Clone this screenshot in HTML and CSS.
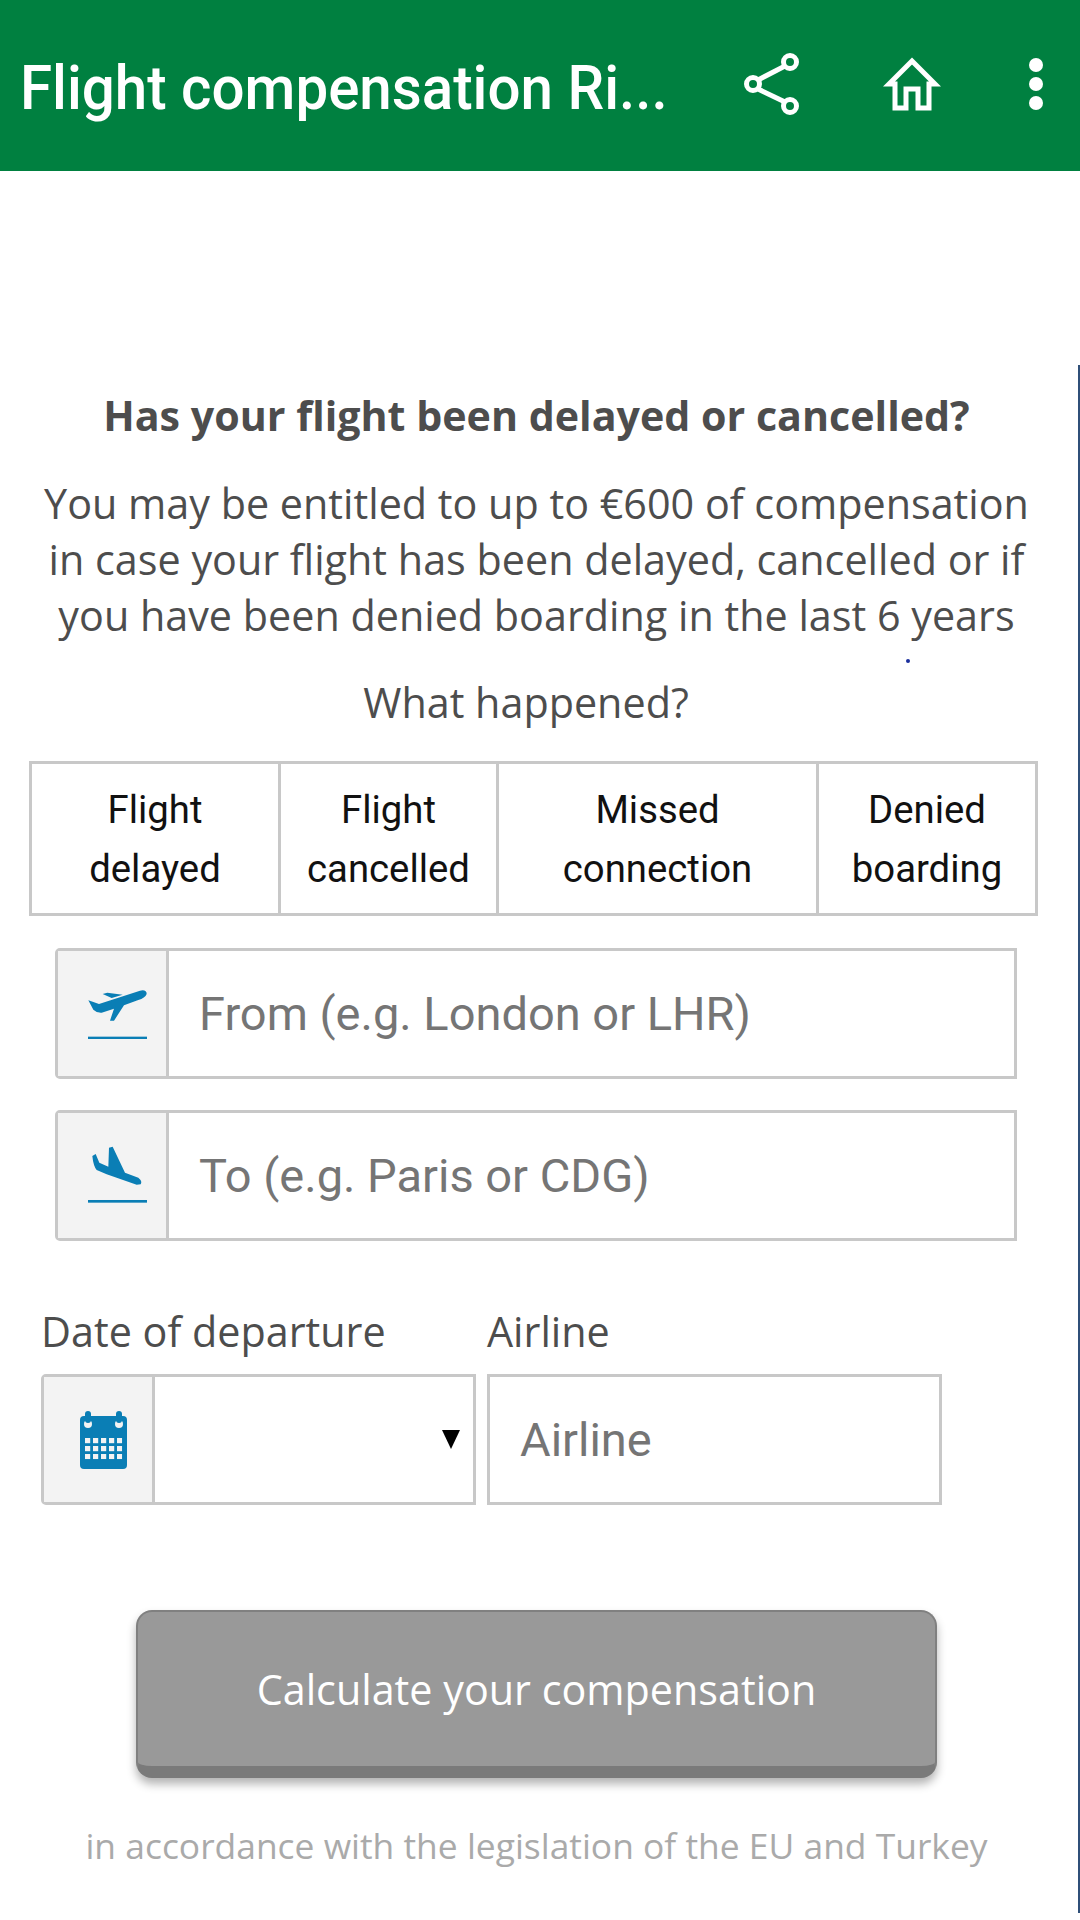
FILE: index.html
```html
<!DOCTYPE html>
<html lang="en">
<head>
  <meta charset="UTF-8">
  <meta name="viewport" content="width=device-width, initial-scale=1.0">
  <title>Flight compensation</title>
  <link rel="stylesheet" href="styles.css">
</head>
<body>
  <header class="app-bar">
    <div class="app-title">Flight compensation Ri...</div>
    <svg class="icon-share" viewBox="0 0 56 62" fill="none" stroke="#fff" stroke-width="5">
      <line x1="41" y1="13" x2="14" y2="27"/>
      <line x1="14" y1="36" x2="41" y2="49"/>
      <circle cx="46" cy="9" r="6.5"/>
      <circle cx="9" cy="31" r="6.5"/>
      <circle cx="46" cy="53" r="6.5"/>
    </svg>
    <svg class="icon-home" viewBox="0 0 58 54" fill="none" stroke="#fff" stroke-width="5">
      <path d="M29 4 L52 27 H46 V51 H35 V32 H23 V51 H12 V27 H6 Z"/>
    </svg>
    <div class="icon-more"><span></span><span></span><span></span></div>
  </header>

  <main class="content">
    <h1 class="headline">Has your flight been delayed or cancelled?</h1>
    <p class="intro">You may be entitled to up to €600 of compensation in case your flight has been delayed, cancelled or if you have been denied boarding in the last 6 years</p>
    <span class="speck"></span>
    <p class="question">What happened?</p>

    <!-- What happened tabs -->
    <div class="tabs">
      <div class="tab tab-delayed">Flight<br>delayed</div>
      <div class="tab tab-cancelled">Flight<br>cancelled</div>
      <div class="tab tab-missed">Missed<br>connection</div>
      <div class="tab tab-denied">Denied<br>boarding</div>
    </div>

    <div class="field route-field">
      <div class="addon">
        <svg class="icon-plane" viewBox="174 170 177 155" fill="#0a7eb5">
          <path d="M175 207 L190 212 L207 218 L330 178 Q350 174 350 188 Q345 200 325 206 L282 222 L252 268 L240 268 L252 232 L215 244 Q200 245 190 235 Z"/>
          <path d="M218 188 L232 184 L278 190 L245 200 Z"/>
          <rect x="174" y="316" width="177" height="8"/>
        </svg>
      </div>
      <input class="field-input" type="text" placeholder="From (e.g. London or LHR)">
    </div>

    <div class="field route-field">
      <div class="addon">
        <svg class="icon-plane" viewBox="174 650 177 175" fill="#0a7eb5">
          <path d="M187 680 L197 674 L208 700 L235 712 L237 655 L248 652 L285 730 L325 745 Q338 755 332 765 L320 766 L230 735 L200 722 Q190 710 187 680 Z"/>
          <rect x="174" y="812" width="177" height="8"/>
        </svg>
      </div>
      <input class="field-input" type="text" placeholder="To (e.g. Paris or CDG)">
    </div>

    <div class="details">
      <div class="date-col">
        <label class="field-label">Date of departure</label>
        <div class="field">
          <div class="addon addon-date">
            <svg class="icon-calendar" viewBox="0 0 47 58">
              <defs>
                <pattern id="cells" x="5" y="27" width="8" height="8" patternUnits="userSpaceOnUse">
                  <rect width="5.2" height="5.2" fill="#f3f3f3"/>
                </pattern>
              </defs>
              <rect y="5" width="47" height="53" rx="4" fill="#0a7eb5"/>
              <rect x="5" y="27" width="37.2" height="21.2" fill="url(#cells)"/>
              <circle cx="8" cy="13" r="4" fill="#f3f3f3"/>
              <circle cx="39" cy="13" r="4" fill="#f3f3f3"/>
              <rect x="5" y="0" width="6" height="12" rx="3" fill="#0a7eb5"/>
              <rect x="36" y="0" width="6" height="12" rx="3" fill="#0a7eb5"/>
            </svg>
          </div>
          <div class="select-wrap">
            <select class="date-select"><option></option></select>
          </div>
        </div>
      </div>
      <div class="airline-col">
        <label class="field-label">Airline</label>
        <div class="field field-plain">
          <input class="field-input" type="text" placeholder="Airline">
        </div>
      </div>
    </div>

    <button class="calc-btn" type="button">Calculate your compensation</button>
    <p class="legal">in accordance with the legislation of the EU and Turkey</p>
  </main>
</body>
</html>
```

FILE: styles.css
```css
* {
  box-sizing: border-box;
}

body {
  margin: 0;
  height: 1920px;
  overflow: hidden;
  background: #fff;
  font-family: "Open Sans", sans-serif;
  color: #4d4d4d;
}

.app-bar {
  display: flex;
  align-items: center;
  height: 171px;
  padding: 0 0 4px 20px;
  background: #008040;
}

.app-title {
  flex: 1;
  padding-top: 8px;
  font-family: Roboto, sans-serif;
  font-weight: 500;
  font-size: 62px;
  color: #fff;
  white-space: nowrap;
  transform: scaleX(0.94);
  transform-origin: left center;
}

.icon-share {
  width: 56px;
  height: 62px;
}

.icon-home {
  width: 58px;
  height: 54px;
  margin-left: 83px;
}

.icon-more {
  display: flex;
  flex-direction: column;
  gap: 5px;
  margin: 0 37px 0 88px;
}

.icon-more span {
  width: 14px;
  height: 14px;
  border-radius: 50%;
  background: #fff;
}

.content {
  position: relative;
  height: 1548px;
  margin-top: 194px;
  padding: 23px 5px 0 0;
  border-right: 2px solid #2f4f78;
}

.headline {
  margin: 0;
  font-size: 41.2px;
  line-height: 54px;
  font-weight: 700;
  text-align: center;
}

.intro {
  margin: 33px 25px 0;
  font-size: 41.3px;
  line-height: 56px;
  text-align: center;
}

.speck {
  position: absolute;
  left: 906px;
  top: 294px;
  width: 4px;
  height: 4px;
  border-radius: 50%;
  background: #1a2f9c;
}

.question {
  margin: 32px 21px 0 0;
  font-size: 41.3px;
  line-height: 54px;
  text-align: center;
}

.tabs {
  display: flex;
  width: 1009px;
  height: 155px;
  margin: 32px 0 0 29px;
  border: 3px solid #c8c8c8;
}

.tab {
  display: flex;
  align-items: center;
  justify-content: center;
  font-family: Roboto, sans-serif;
  font-size: 38.3px;
  line-height: 59px;
  text-align: center;
  color: #111;
  border-right: 3px solid #c8c8c8;
}

.tab-delayed { width: 249px; }
.tab-cancelled { width: 218px; }
.tab-missed { width: 320px; }
.tab-denied { flex: 1; border-right: none; }

.field {
  display: flex;
  height: 131px;
  border: 3px solid #c8c8c8;
  border-radius: 5px 0 0 5px;
  background: #fff;
}

.route-field {
  width: 962px;
  margin: 32px 0 0 55px;
}

.route-field + .route-field {
  margin-top: 31px;
}

.addon {
  display: flex;
  align-items: center;
  flex: none;
  width: 111px;
  padding-left: 30px;
  background: #f3f3f3;
  border-right: 3px solid #c8c8c8;
}

.addon-date {
  padding-left: 36px;
}

.icon-plane {
  width: 59px;
}

.icon-calendar {
  width: 47px;
  height: 58px;
}

.field-input {
  flex: 1;
  min-width: 0;
  padding: 0 0 0 30px;
  border: none;
  outline: none;
  background: transparent;
  font-family: Roboto, sans-serif;
  font-size: 47px;
}

.field-input::placeholder {
  color: #757575;
  opacity: 1;
}

.details {
  display: flex;
  gap: 11px;
  margin: 63px 0 0 41px;
}

.date-col {
  width: 435px;
}

.airline-col {
  width: 455px;
}

.field-label {
  display: block;
  margin-bottom: 16px;
  font-size: 41.3px;
  line-height: 54px;
}

.select-wrap {
  position: relative;
  flex: 1;
}

.select-wrap::after {
  content: "";
  position: absolute;
  right: 13px;
  top: 53px;
  border-left: 9px solid transparent;
  border-right: 9px solid transparent;
  border-top: 19px solid #000;
}

.date-select {
  width: 100%;
  height: 100%;
  border: none;
  outline: none;
  appearance: none;
  background: transparent;
}

.field-plain {
  border-radius: 0;
}

.calc-btn {
  display: block;
  width: 801px;
  height: 168px;
  margin: 105px 0 0 136px;
  padding: 0;
  border: 2px solid #808080;
  border-bottom: 12px solid #7a7a7a;
  border-radius: 16px;
  background: #999;
  box-shadow: 0 6px 10px rgba(0, 0, 0, 0.3);
  font-family: "Open Sans", sans-serif;
  font-size: 41.3px;
  color: #fff;
}

.legal {
  margin: 44px 0 0;
  font-size: 35.4px;
  line-height: 46px;
  text-align: center;
  color: #aaa;
}
```
